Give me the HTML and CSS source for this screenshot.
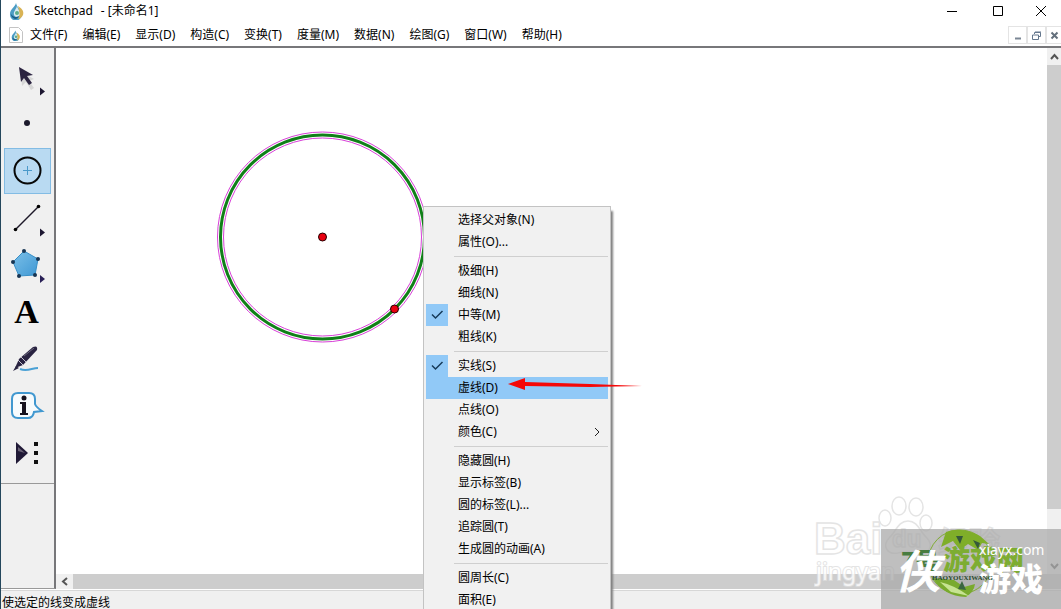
FILE: index.html
```html
<!DOCTYPE html>
<html lang="zh-CN">
<head>
<meta charset="utf-8">
<title>Sketchpad - [未命名1]</title>
<link rel="stylesheet" href="styles.css">
</head>
<body>
<svg class="defs" aria-hidden="true">
  <defs>
    <linearGradient id="gem" x1="0" y1="0" x2="1" y2="1"><stop offset="0" stop-color="#7cc0e8"/><stop offset="1" stop-color="#3f98d4"/></linearGradient>
    <symbol id="drop" viewBox="0 0 16 18">
      <path d="M7 1C6 5 1 7 1 12a6 6 0 0 0 12 1C13 8 8 6 7 1z" fill="#4b9cc4"/>
      <path d="M8 3c0 4-4 6-3 10 1 3 5 2 6 0 1-4-3-6-3-10z" fill="#d8ebf2"/>
      <path d="M9 4c5 3 6 6 5 9-1 2-3 4-5 4 3-4 1-8 0-13z" fill="#d9b354"/>
      <path d="M2 12c2 3 5 4 8 2-1 2-2 3-4 3-3-1-4-3-4-5z" fill="#195d87"/>
      <circle cx="8" cy="11" r="2" fill="#5cae8c"/>
    </symbol>
  </defs>
</svg>
<div class="app">
  <header class="titlebar">
    <svg class="logo" width="16" height="18"><use href="#drop"/></svg>
    <h1 class="title"><span>Sketchpad</span><span>- [未命名1]</span></h1>
    <div class="window-buttons">
      <button aria-label="最小化"><svg width="12" height="12"><path d="M1 6.5h10" stroke="#000"/></svg></button>
      <button aria-label="最大化"><svg width="12" height="12"><path d="M1.5 1.5h9v9h-9z" fill="none" stroke="#000"/></svg></button>
      <button aria-label="关闭"><svg width="12" height="12"><path d="M1 1l10 10M11 1L1 11" stroke="#000"/></svg></button>
    </div>
  </header>
  <nav class="menubar">
    <svg class="doc" width="14" height="16"><path d="M.5.5h9l4 4v11H.5z" fill="#fff" stroke="#c4c4c4"/><use href="#drop" x="2" y="3" width="10" height="11"/></svg>
    <button>文件(F)</button><button>编辑(E)</button><button>显示(D)</button><button>构造(C)</button><button>变换(T)</button><button>度量(M)</button><button>数据(N)</button><button>绘图(G)</button><button>窗口(W)</button><button>帮助(H)</button>
    <div class="doc-buttons">
      <button aria-label="最小化文档"><svg width="9" height="9"><path d="M2 7.5h6" stroke="#7b8795" stroke-width="2"/></svg></button>
      <button aria-label="还原文档"><svg width="9" height="9"><path d="M2.5 3V1.5h6v4H7M.5 4h6v4.500h-6zM3 1h6" fill="none" stroke="#64778d"/></svg></button>
      <button aria-label="关闭文档"><svg width="9" height="9"><path d="M1.500 1.500l6 6M7.500 1.500l-6 6" stroke="#64707c" stroke-width="2"/></svg></button>
    </div>
  </nav>
  <main class="workspace">
    <aside class="toolbar">
      <div class="tools">
        <button aria-label="选择"><svg width="46" height="46"><path d="M17 18l13 7-5 2 5 7-3 2-5-8-4 4z" fill="#888" opacity=".25"/><path d="M15 13l14 8-6 1 5 7-3 2-5-7-3 4z" fill="#2b2340"/><path d="M36 33.500v8l5-4z" fill="#1d1731"/></svg></button>
        <button aria-label="点"><svg width="46" height="46"><circle cx="23" cy="22" r="3" fill="#1c1a2c"/></svg></button>
        <button class="selected" aria-label="圆" aria-pressed="true"><svg width="46" height="46"><circle cx="23.500" cy="22.500" r="13" fill="none" stroke="#080808" stroke-width="2"/><path d="M19 22.500h9M23.500 18v9" stroke="#4a99ca"/></svg></button>
        <button aria-label="线段"><svg width="46" height="46"><path d="M11.500 34.500l23-23" stroke="#1d1828" stroke-width="1.500"/><circle cx="11.500" cy="34.500" r="1.800"/><circle cx="34.500" cy="11.500" r="1.800"/><path d="M36 33.500v8l5-4z" fill="#1d1731"/></svg></button>
        <button aria-label="多边形"><svg width="46" height="46"><path d="M9 20l11-11 14 8-3 16-16 1z" fill="url(#gem)" stroke="#378fc7"/><g fill="#173553"><circle cx="9" cy="20" r="2"/><circle cx="20" cy="9" r="2"/><circle cx="34" cy="17" r="2"/><circle cx="31" cy="33" r="2"/><circle cx="15" cy="34" r="2"/></g><path d="M36 33v8l5-4z" fill="#292056"/></svg></button>
        <button class="text-tool" aria-label="文本">A</button>
        <button aria-label="标记"><svg width="46" height="46"><path d="M11 32l4-9L29 11q5-2 4 3L19 29z" fill="#292341"/><path d="M14 24l5 5M17 21l5 5" stroke="#c7c3d0"/><path d="M20 20L30 12" stroke="#6d687d"/><path d="M9 35l3-5 3 2z" fill="#292341"/><path d="M16 33c7 3 12-1 18-1" fill="none" stroke="#4ba1d5" stroke-width="2"/></svg></button>
        <button aria-label="信息"><svg width="46" height="46"><path d="M14 10h11q6 0 6 6v5q1 3 7 7l-8 1q-1 6-6 6H14q-6 0-6-6V16q0-6 6-6z" fill="#f7fbfd" stroke="#4198d0" stroke-width="2"/><path d="M16 19h6v11h2v2h-8v-2h2v-9h-2z" fill="#16131f"/><circle cx="20" cy="15" r="2.500" fill="#16131f"/></svg></button>
        <button aria-label="自定义工具"><svg width="46" height="46"><path d="M12 12l12 11-12 11z" fill="#201936"/><path d="M14 17l7 6-7-2z" fill="#696175"/><path d="M30 12h4v4h-4zM30 21h4v4h-4zM30 30h4v4h-4z" fill="#111"/></svg></button>
      </div>
    </aside>
    <section class="document">
      <svg class="sketch" aria-label="画板">
        <circle cx="266.500" cy="189" r="102" fill="none" stroke="#108018" stroke-width="3"/>
        <circle cx="266.500" cy="189" r="105" fill="none" stroke="#d840d8"/>
        <circle cx="266.500" cy="189" r="99" fill="none" stroke="#d840d8"/>
        <circle cx="266.500" cy="189" r="4" fill="#e80010" stroke="#260000"/>
        <circle cx="338.500" cy="261" r="4" fill="#e80010" stroke="#260000"/>
      </svg>
      <div class="vscroll">
        <button aria-label="向上滚动"><svg width="9" height="8"><path d="M1 6l3.500-4L8 6" fill="none" stroke="#555" stroke-width="2"/></svg></button>
        <div class="thumb"></div>
        <button class="last" aria-label="向下滚动"><svg width="9" height="8"><path d="M1 2l3.500 4L8 2" fill="none" stroke="#555" stroke-width="2"/></svg></button>
      </div>
      <div class="hscroll">
        <button aria-label="向左滚动"><svg width="8" height="9"><path d="M6 1L2 4.500 6 8" fill="none" stroke="#555" stroke-width="2"/></svg></button>
        <div class="thumb"></div>
      </div>
    </section>
  </main>
  <footer class="status">使选定的线变成虚线</footer>

  <svg class="baidu" width="190" height="110" viewBox="0 0 190 110" aria-hidden="true">
    <g fill="#fff" stroke="#dedede" stroke-width="1.500">
      <ellipse cx="85" cy="17" rx="7" ry="9"/><ellipse cx="102" cy="18" rx="7" ry="9"/><ellipse cx="71" cy="29" rx="6" ry="8"/><ellipse cx="112" cy="34" rx="6" ry="8"/>
      <path d="M94 32c10 0 12 11 19 17 7 8 2 17-9 15-7-2-13-2-20 0-11 2-16-7-9-15 7-6 9-17 19-17z"/>
      <text class="baidu-name" x="0" y="65">Bai</text><text class="baidu-du" x="78" y="58">du</text><text class="baidu-cn" x="124" y="65">经验</text>
    </g>
    <text class="baidu-url" x="2" y="91">jingyan</text>
  </svg>
  <div class="game-mark" aria-hidden="true">
    <svg width="180" height="80" viewBox="0 0 180 80">
      <circle cx="79" cy="33" r="32" fill="none" stroke="#80ac34"/>
      <path d="M65 3q15-6 34 4l9 8-7-1-4 7-10-6-8 6-7-9-12 6z" fill="#7fae29"/>
      <path d="M75 7h7l-3 8zM92 11l7 3-2 6z" fill="#35583b"/>
      <path d="M52 49q10 18 33 19 8-5 9-13l-11 3-10-7z" fill="#79aa2e"/>
      <path d="M59 53q14 3 29 14l-18-4z" fill="#c7e392"/><path d="M81 52l4 9-8-1z" fill="#3a6540"/>
      <text class="brand-no" x="20" y="41">7号</text><text class="brand-game" x="62" y="41">游戏网</text>
      <text class="brand-xia" x="14" y="59">侠</text><text class="brand-games" x="98" y="62">游戏</text>
      <text class="brand-en" x="51" y="51">HAOYOUXIWANG</text><text class="brand-url" x="98" y="26">xiayx.com</text>
    </svg>
  </div>

  <div class="context-menu" role="menu">
    <button role="menuitem">选择父对象(N)</button>
    <button role="menuitem">属性(O)...</button>
    <hr>
    <button role="menuitem">极细(H)</button>
    <button role="menuitem">细线(N)</button>
    <button role="menuitemradio" aria-checked="true"><svg class="check" width="22" height="22"><path d="M6 10.500l3.500 3.500 7-7" fill="none" stroke="#163b59" stroke-width="1.500"/></svg>中等(M)</button>
    <button role="menuitem">粗线(K)</button>
    <hr>
    <button role="menuitemradio" aria-checked="true"><svg class="check" width="22" height="22"><path d="M6 10.500l3.500 3.500 7-7" fill="none" stroke="#163b59" stroke-width="1.500"/></svg>实线(S)</button>
    <button class="highlight" role="menuitem">虚线(D)</button>
    <button role="menuitem">点线(O)</button>
    <button role="menuitem">颜色(C)<svg class="submenu" width="6" height="10"><path d="M1 1l4 4-4 4" fill="none" stroke="#222"/></svg></button>
    <hr>
    <button role="menuitem">隐藏圆(H)</button>
    <button role="menuitem">显示标签(B)</button>
    <button role="menuitem">圆的标签(L)...</button>
    <button role="menuitem">追踪圆(T)</button>
    <button role="menuitem">生成圆的动画(A)</button>
    <hr>
    <button role="menuitem">圆周长(C)</button>
    <button role="menuitem">面积(E)</button>
    <svg class="pointer" width="134" height="14" aria-hidden="true"><path d="M0 6L17 0v4l65 2 52 2-52 1-65-1v4z" fill="#f50808"/></svg>
  </div>
</div>
</body>
</html>
```

FILE: styles.css
```css
* { box-sizing: border-box; }
body {
  margin: 0;
  font: 12px/16px "Noto Sans", "Noto Sans CJK SC", sans-serif;
  color: #000;
}
button {
  margin: 0;
  padding: 0;
  border: 0;
  background: none;
  font: inherit;
  color: inherit;
}
svg { display: block; }
.defs { position: absolute; width: 0; height: 0; }
.app {
  position: relative;
  display: flex;
  flex-direction: column;
  height: 100vh;
  overflow: hidden;
  border-left: 1px solid #24475c;
  background: #fff;
}
.titlebar {
  display: flex;
  align-items: center;
  height: 22px;
  padding-left: 8px;
}
.title {
  display: flex;
  align-items: baseline;
  gap: 8px;
  margin: 0 0 0 9px;
  font-size: 12px;
  font-weight: 400;
}
.title span:first-child { font-size: 12px; }
.window-buttons { display: flex; margin-left: auto; }
.window-buttons button {
  display: grid;
  place-items: center;
  width: 46px;
  height: 20px;
}
.window-buttons button:last-child { width: 40px; }
.menubar {
  display: flex;
  align-items: center;
  gap: 15px;
  height: 26px;
  padding: 2px 0 0 8px;
  border-bottom: 2px solid #77777a;
}
.doc { margin-right: -8px; }
.doc-buttons { display: flex; margin-left: auto; }
.doc-buttons button {
  display: grid;
  place-items: center;
  width: 19px;
  height: 18px;
  border: 1px solid #e4e4e4;
}
.doc-buttons button:last-child { width: 15px; border-right: 0; }
.workspace { flex: 1; display: flex; min-height: 0; }
.toolbar {
  width: 55px;
  border-right: 2px solid #77777a;
  border-bottom: 1px solid #999;
  background: #f0f0f0;
}
.tools {
  display: flex;
  flex-direction: column;
  gap: 1px;
  padding: 6px 3px 7px;
  border-bottom: 1px solid #999;
}
.tools button { width: 47px; height: 46px; }
.tools .selected { background: #b9daf2; box-shadow: inset 0 0 0 1px #83bce4; }
.tools .text-tool { padding-right: 2px; font: bold 34px/46px "Liberation Serif", serif; }
.document {
  flex: 1;
  display: grid;
  grid-template: 1fr 15px / 1fr 14px;
  min-width: 0;
}
.sketch { width: 100%; height: 100%; min-height: 0; }
.vscroll, .hscroll { display: flex; background: #f0f0f0; }
.vscroll { flex-direction: column; }
.hscroll { grid-column: 1 / 3; }
.vscroll button, .hscroll button { display: grid; place-items: center; flex: 0 0 17px; }
.vscroll .thumb { flex: 0 1 444px; background: #cdcdcd; }
.vscroll .last { margin-top: auto; }
.hscroll .thumb { flex: 1; background: #cdcdcd; }
.status {
  height: 19px;
  margin-top: 1px;
  padding: 4px 1px 0;
  border-top: 1px solid #d7d7d7;
  background: #f0f0f0;
  line-height: 16px;
}
.context-menu {
  position: absolute;
  top: 206px;
  left: 422px;
  width: 188px;
  padding: 2px;
  border: 1px solid #c3c3c3;
  background: #f1f1f1;
  box-shadow: 3px 4px 2px -1px #808080;
}
.context-menu button {
  display: flex;
  align-items: center;
  width: 100%;
  height: 22px;
  padding-left: 32px;
  position: relative;
}
.context-menu .highlight { background: #91c9f7; }
.context-menu hr {
  height: 1px;
  margin: 3px 0 3px 28px;
  border: 0;
  background: #cfcfcf;
}
.check { position: absolute; left: 0; top: 0; background: #91c9f7; }
.submenu { margin-left: auto; margin-right: 8px; }
.pointer { position: absolute; left: 84px; top: 171px; }
.baidu { position: absolute; right: 57px; bottom: 10px; opacity: .8; }
.baidu-name { font: bold 44px "Liberation Sans", sans-serif; }
.baidu-du { font: bold 24px "Liberation Sans", sans-serif; }
.baidu-cn { font: bold 31px "Noto Sans CJK SC", sans-serif; }
.baidu-url {
  font: 23px "Noto Sans", sans-serif;
  fill: #fff;
  stroke: #dedede;
  stroke-width: 2px;
  paint-order: stroke;
}
.game-mark { position: absolute; right: 0; bottom: 0; background: rgba(170, 170, 170, .75); }
.brand-no { font: 900 24px "Noto Sans CJK SC", sans-serif; fill: #487c40; }
.brand-game { font: 900 27px "Noto Sans CJK SC", sans-serif; fill: #7dad32; }
.brand-xia { font: italic 500 45px "Noto Sans CJK SC", sans-serif; fill: #fff; stroke: #fff; stroke-width: 1px; }
.brand-games { font: 900 32px "Noto Sans CJK SC", sans-serif; fill: #fff; }
.brand-en { font: bold 7px "Liberation Serif", serif; fill: #284a2e; }
.brand-url { font: 14px "Noto Sans", sans-serif; fill: #fff; }
```
